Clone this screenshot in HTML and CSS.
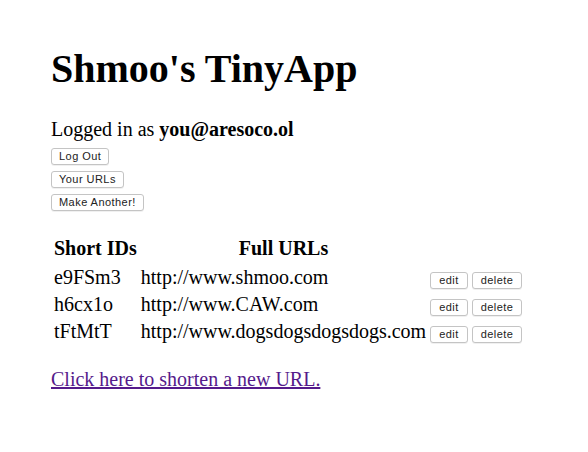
FILE: index.html
```html
<!DOCTYPE html>
<html>
<head>
<meta charset="utf-8">
<title>TinyApp</title>
<link rel="stylesheet" href="styles.css">
</head>
<body>
<div class="page">
  <h1 class="title">Shmoo's TinyApp</h1>
  <div class="login">Logged in as <b>you@aresoco.ol</b></div>
  <div class="actions">
    <button class="btn">Log Out</button>
    <button class="btn">Your URLs</button>
    <button class="btn">Make Another!</button>
  </div>
  <table class="urls">
    <tr class="head"><th>Short IDs</th><th>Full URLs</th><th></th><th></th></tr>
    <tr><td>e9FSm3</td><td>http://www.shmoo.com</td><td><button class="btn small">edit</button></td><td><button class="btn small">delete</button></td></tr>
    <tr><td>h6cx1o</td><td>http://www.CAW.com</td><td><button class="btn small">edit</button></td><td><button class="btn small">delete</button></td></tr>
    <tr><td>tFtMtT</td><td>http://www.dogsdogsdogsdogs.com</td><td><button class="btn small">edit</button></td><td><button class="btn small">delete</button></td></tr>
  </table>
  <p class="new"><a href="#" class="newlink">Click here to shorten a new URL.</a></p>
</div>
</body>
</html>
```
FILE: styles.css
```css
body {
  margin: 0;
  font-family: "Liberation Serif", "Times New Roman", serif;
  font-size: 20px;
  color: #000;
  background: #fff;
}
.page {
  padding: 20px 51px;
}
.title {
  font-size: 40px;
  margin: 26px 0 26px;
  line-height: 46px;
}
.login {
  line-height: 23px;
}
.actions {
  display: flex;
  flex-direction: column;
  align-items: flex-start;
  gap: 6px;
  margin-top: 7px;
}
.btn {
  font-family: "Liberation Sans", Arial, sans-serif;
  font-size: 11px;
  letter-spacing: 0.45px;
  color: #222;
  background: #fff;
  border: 1px solid #c4c4c4;
  border-radius: 3px;
  box-shadow: 0 1px 0 rgba(0,0,0,0.06);
  height: 17px;
  line-height: 15px;
  padding: 0 7px;
  margin: 0;
}
.small {
  padding: 0 8px;
}
.urls {
  margin-top: 23px;
  border-spacing: 2px;
}
.urls th, .urls td {
  padding: 1px;
  line-height: 23px;
}
.urls .head th {
  padding-bottom: 3px;
}
.urls td {
  text-align: left;
}
.new {
  margin: 22px 0 20px;
}
.newlink {
  color: #551a8b;
}
```
